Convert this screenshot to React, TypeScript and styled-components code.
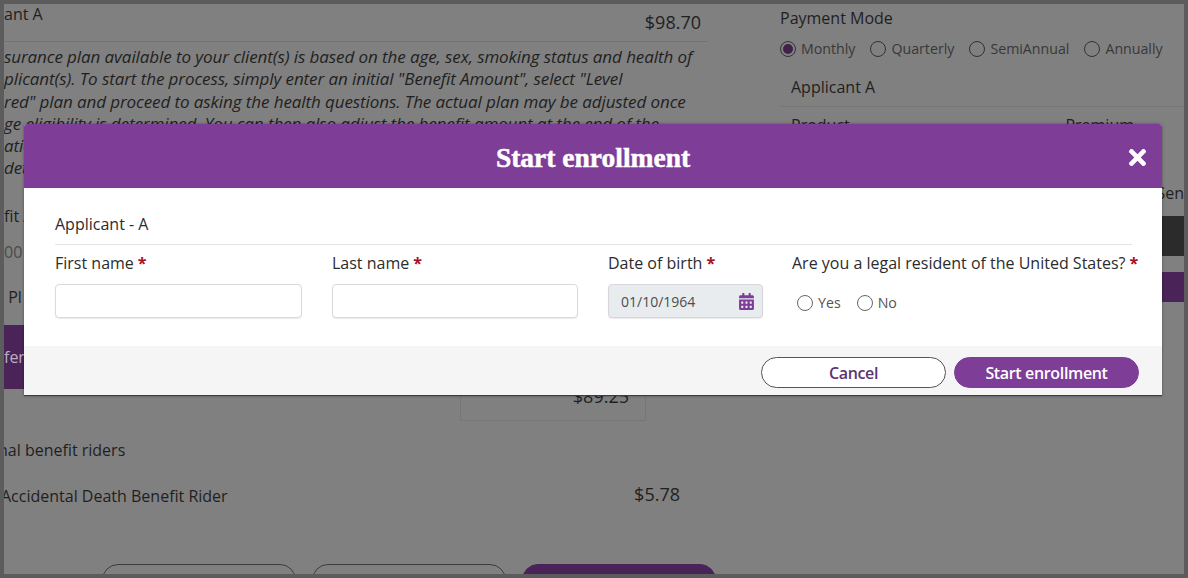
import React from "react";
import styled, { createGlobalStyle } from "styled-components";
import { FaCalendarAlt, FaTimes } from "react-icons/fa";

const GlobalStyle = createGlobalStyle`
  html, body {
    margin: 0;
    padding: 0;
    background: #5c5c5c;
  }
  * {
    box-sizing: border-box;
  }
`;

const Page = styled.div`
  position: relative;
  width: 1188px;
  height: 578px;
  padding: 4px;
  background: #5c5c5c;
  overflow: hidden;
  font-family: "Open Sans", "Liberation Sans", sans-serif;
  font-size: 16px;
  color: #1f1f1f;
`;

const Backdrop = styled.div`
  display: grid;
  grid-template-columns: 727px 453px;
  height: 570px;
  background: #808080;
  overflow: hidden;
`;

const LeftColumn = styled.div`
  display: flex;
  flex-direction: column;
  overflow: hidden;

  & > * {
    flex: none;
  }
`;

const RightColumn = styled.div`
  display: flex;
  flex-direction: column;
  padding: 3px 0 0 49px;
  overflow: hidden;
`;

const SummaryRow = styled.div`
  display: flex;
  justify-content: space-between;
  height: 38px;
  margin-right: 23px;
  padding-right: 7px;
  border-bottom: 1px solid #747474;
`;

const ClippedName = styled.span`
  margin-top: -1px;
  line-height: 22px;
`;

const Amount = styled.span`
  font-size: 18px;
  line-height: 24px;
  margin-top: 6px;
`;

const Notice = styled.div`
  height: 158px;
  margin-top: 4px;
  font-style: italic;
  font-size: 17px;
  letter-spacing: -0.09px;
  line-height: 22.3px;
  white-space: nowrap;
`;

const FieldStub = styled.div<{ $height: number; $color?: string }>`
  display: flex;
  align-items: center;
  height: ${(p) => p.$height}px;
  margin-right: 680px;
  color: ${(p) => p.$color || "#1f1f1f"};
  white-space: nowrap;
`;

const OfferBlock = styled.div`
  display: flex;
  align-items: center;
  height: 64px;
  margin: 7px 680px 0 0;
  background: #4a2458;
  color: #bcaec2;
`;

const PriceBox = styled.div`
  display: flex;
  justify-content: flex-end;
  align-items: flex-end;
  width: 186px;
  height: 32px;
  margin-left: 456px;
  padding: 0 16px 14px 0;
  border: 1px solid #767676;
  border-top: none;
  font-size: 18px;
  line-height: 20px;
`;

const RidersHeading = styled.div`
  margin: 18px 0 0 -6px;
  line-height: 22px;
`;

const RiderRow = styled.div`
  display: flex;
  justify-content: space-between;
  margin: 23px 51px 0 -3px;
  line-height: 24px;
`;

const RiderPrice = styled.span`
  font-size: 18px;
  margin-top: -2px;
`;

const PlanActions = styled.div`
  display: flex;
  gap: 16px;
  margin: 56px 0 0 98px;
`;

const OutlineStub = styled.div`
  width: 194px;
  height: 32px;
  border: 1px solid #3d3d3d;
  border-radius: 16px;
`;

const FilledStub = styled(OutlineStub)`
  background: #4a2458;
  border-color: #4a2458;
`;

const PaymentTitle = styled.div`
  font-size: 16px;
  line-height: 22px;
`;

const ModeRow = styled.div`
  display: flex;
  gap: 15px;
  margin-top: 10px;
`;

const RadioLabel = styled.label<{ $dim?: boolean }>`
  display: inline-flex;
  align-items: center;
  gap: 5px;
  font-size: 14.2px;
  line-height: 20px;
  color: ${(p) => (p.$dim ? "#383838" : "#555555")};
`;

const RadioMark = styled.span<{ $checked?: boolean; $dim?: boolean }>`
  position: relative;
  flex: none;
  width: 16px;
  height: 16px;
  border-radius: 50%;
  border: 1px solid ${(p) => (p.$dim ? "#333333" : "#666666")};
  background: ${(p) => (p.$dim ? "transparent" : "#ffffff")};

  &::after {
    content: "";
    display: ${(p) => (p.$checked ? "block" : "none")};
    position: absolute;
    inset: 2px;
    border-radius: 50%;
    background: #3f2149;
  }
`;

const QuoteTitle = styled.div`
  margin: 17px 0 0 11px;
  line-height: 22px;
`;

const QuoteRule = styled.div`
  margin-top: 8px;
  border-top: 1px solid #767676;
`;

const QuoteHead = styled.div`
  display: flex;
  justify-content: space-between;
  margin: 8px 50px 0 11px;
  line-height: 20px;
`;

const SendLabel = styled.div`
  margin-top: 47px;
  text-align: right;
  line-height: 22px;
`;

const DarkBar = styled.div`
  height: 40px;
  margin-top: 12px;
  background: #2b2b2b;
`;

const PurpleBar = styled.div`
  height: 30px;
  margin-top: 16px;
  background: #4a2458;
`;

const Modal = styled.div`
  position: absolute;
  top: 124px;
  left: 24px;
  display: flex;
  flex-direction: column;
  width: 1138px;
  height: 272px;
  border-radius: 3px 3px 0 0;
  border-bottom: 1px solid #3c3c3c;
  background: #ffffff;
  overflow: hidden;
  box-shadow: 0 0 3px rgba(0, 0, 0, 0.4);
`;

const ModalHeader = styled.header`
  position: relative;
  display: flex;
  align-items: center;
  justify-content: center;
  flex: none;
  height: 64px;
  background: #7e3d97;
`;

const ModalTitle = styled.h2`
  margin: 3px 0 0;
  font-family: "Liberation Serif", "Times New Roman", serif;
  font-size: 27.5px;
  line-height: 32px;
  font-weight: 700;
  color: #ffffff;
  -webkit-text-stroke: 0.5px #ffffff;
`;

const CloseButton = styled.button`
  position: absolute;
  top: 21px;
  right: 12px;
  display: flex;
  padding: 0;
  border: none;
  background: none;
  color: #ffffff;
  font-size: 25px;
`;

const ModalBody = styled.div`
  flex: 1;
  padding: 25px 30px 0 31px;
`;

const SectionTitle = styled.div`
  height: 32px;
  border-bottom: 1px solid #e4e4e4;
  line-height: 22px;
  color: #2c2c2c;
`;

const FieldGrid = styled.div`
  display: grid;
  grid-template-columns: 277px 276px 184px 1fr;
  margin-top: 7px;
`;

const Field = styled.div`
  display: flex;
  flex-direction: column;
`;

const FieldLabel = styled.label`
  height: 22px;
  line-height: 22px;
  white-space: nowrap;
  color: #2c2c2c;
`;

const Required = styled.span`
  margin-left: 4px;
  font-weight: 700;
  color: #a80e24;
`;

const TextInput = styled.input<{ $width: number }>`
  width: ${(p) => p.$width}px;
  height: 34px;
  margin-top: 10px;
  padding: 0 12px;
  border: 1px solid #dadada;
  border-radius: 4px;
  background: #ffffff;
  box-shadow: 0 1px 1px rgba(0, 0, 0, 0.08);
`;

const DateBox = styled.div`
  display: flex;
  align-items: center;
  justify-content: space-between;
  width: 155px;
  height: 34px;
  margin-top: 10px;
  padding: 0 7px 0 12px;
  border: 1px solid #d5d7da;
  border-radius: 4px;
  background: #e9ecef;
  font-size: 14px;
  color: #4c4c4c;
  box-shadow: 0 1px 1px rgba(0, 0, 0, 0.08);
`;

const CalendarIcon = styled(FaCalendarAlt)`
  font-size: 17px;
  color: #7e3d97;
`;

const AnswerRow = styled.div`
  display: flex;
  gap: 16px;
  margin: 19px 0 0 5px;
`;

const ModalFooter = styled.footer`
  display: flex;
  justify-content: flex-end;
  gap: 8px;
  flex: none;
  height: 49px;
  padding: 11px 23px 0 0;
  background: #f5f5f5;
`;

const PillButton = styled.button<{ $primary?: boolean }>`
  width: 185px;
  height: 31px;
  border: 1px solid ${(p) => (p.$primary ? "#7e3d97" : "#555555")};
  border-radius: 16px;
  background: ${(p) => (p.$primary ? "#7e3d97" : "#ffffff")};
  color: ${(p) => (p.$primary ? "#ffffff" : "#5b3570")};
  font-family: inherit;
  font-size: 16px;
  font-weight: 600;
  letter-spacing: -0.35px;
`;

const noticeLines = [
  "surance plan available to your client(s) is based on the age, sex, smoking status and health of",
  'plicant(s). To start the process, simply enter an initial "Benefit Amount", select "Level',
  'red" plan and proceed to asking the health questions. The actual plan may be adjusted once',
  "ge eligibility is determined. You can then also adjust the benefit amount at the end of the",
  "atic",
  "det",
];

const modes = ["Monthly", "Quarterly", "SemiAnnual", "Annually"];

export default function App() {
  return (
    <>
      <GlobalStyle />
      <Page>
        <Backdrop>
          <LeftColumn>
            <SummaryRow>
              <ClippedName>ant A</ClippedName>
              <Amount>$98.70</Amount>
            </SummaryRow>
            <Notice>
              {noticeLines.map((line) => (
                <div key={line}>{line}</div>
              ))}
            </Notice>
            <FieldStub $height={24}>fit A</FieldStub>
            <FieldStub $height={48} $color="#4a4a4a">00</FieldStub>
            <FieldStub $height={42}>&nbsp;Pl</FieldStub>
            <OfferBlock>fer</OfferBlock>
            <PriceBox>$89.25</PriceBox>
            <RidersHeading>nal benefit riders</RidersHeading>
            <RiderRow>
              <span>Accidental Death Benefit Rider</span>
              <RiderPrice>$5.78</RiderPrice>
            </RiderRow>
            <PlanActions>
              <OutlineStub />
              <OutlineStub />
              <FilledStub />
            </PlanActions>
          </LeftColumn>
          <RightColumn>
            <PaymentTitle>Payment Mode</PaymentTitle>
            <ModeRow>
              {modes.map((mode) => (
                <RadioLabel key={mode} $dim>
                  <RadioMark $dim $checked={mode === "Monthly"} />
                  {mode}
                </RadioLabel>
              ))}
            </ModeRow>
            <QuoteTitle>Applicant A</QuoteTitle>
            <QuoteRule />
            <QuoteHead>
              <span>Product</span>
              <span>Premium</span>
            </QuoteHead>
            <SendLabel>Sen</SendLabel>
            <DarkBar />
            <PurpleBar />
          </RightColumn>
        </Backdrop>
        <Modal>
          <ModalHeader>
            <ModalTitle>Start enrollment</ModalTitle>
            <CloseButton aria-label="Close">
              <FaTimes />
            </CloseButton>
          </ModalHeader>
          <ModalBody>
            <SectionTitle>Applicant - A</SectionTitle>
            <FieldGrid>
              <Field>
                <FieldLabel>
                  First name<Required>*</Required>
                </FieldLabel>
                <TextInput $width={247} />
              </Field>
              <Field>
                <FieldLabel>
                  Last name<Required>*</Required>
                </FieldLabel>
                <TextInput $width={246} />
              </Field>
              <Field>
                <FieldLabel>
                  Date of birth<Required>*</Required>
                </FieldLabel>
                <DateBox>
                  01/10/1964
                  <CalendarIcon />
                </DateBox>
              </Field>
              <Field>
                <FieldLabel>
                  Are you a legal resident of the United States?<Required>*</Required>
                </FieldLabel>
                <AnswerRow>
                  <RadioLabel>
                    <RadioMark />
                    Yes
                  </RadioLabel>
                  <RadioLabel>
                    <RadioMark />
                    No
                  </RadioLabel>
                </AnswerRow>
              </Field>
            </FieldGrid>
          </ModalBody>
          <ModalFooter>
            <PillButton>Cancel</PillButton>
            <PillButton $primary>Start enrollment</PillButton>
          </ModalFooter>
        </Modal>
      </Page>
    </>
  );
}
